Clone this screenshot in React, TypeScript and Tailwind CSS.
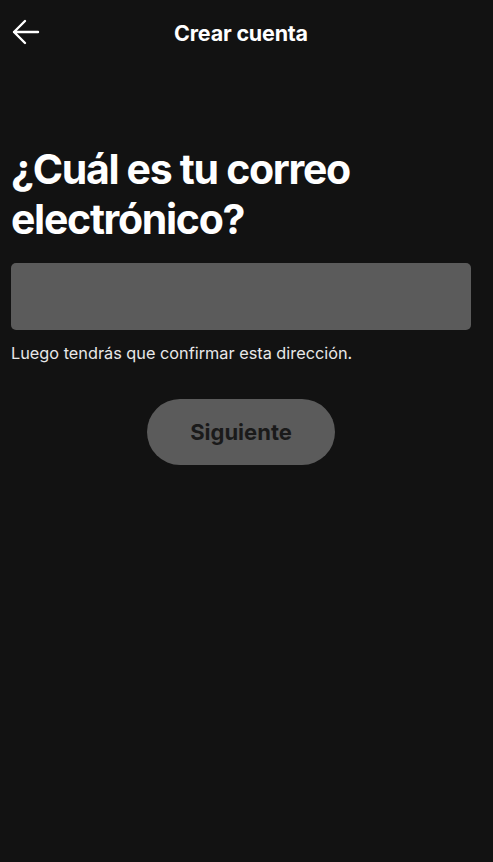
import React from "react";

const font = { fontFamily: "Inter, 'Noto Sans', sans-serif" };

export default function App() {
  return (
    <div className="min-h-[862px] w-full bg-[#121212] px-[11px] text-white" style={font}>
      <div className="flex w-[460px] flex-col">
        <header className="relative flex h-[66px] items-center justify-center">
          <button className="absolute left-0 top-[17px] text-white" title="Atrás">
            <svg width="30" height="30" viewBox="0 0 30 30" fill="none">
              <path
                d="M27 15H3M14 4L3 15l11 11"
                stroke="currentColor"
                strokeWidth="2.4"
                strokeLinecap="round"
                strokeLinejoin="round"
              />
            </svg>
          </button>
          <h1 className="text-[21.5px] font-bold tracking-[-0.2px]">Crear cuenta</h1>
        </header>

        <h2 className="mt-[78px] text-[41px] font-bold leading-[50px] tracking-[-1.3px]">
          ¿Cuál es tu correo electrónico?
        </h2>

        <input
          type="email"
          className="mt-[19px] h-[67px] w-full rounded-[5px] bg-[#5b5b5b] px-3 text-lg text-white outline-none"
        />
        <p className="mt-[12px] text-[16.3px] leading-[22px] text-[#e8e8e8]">
          Luego tendrás que confirmar esta dirección.
        </p>

        <div className="mt-[35px] flex justify-center">
          <button className="h-[66px] w-[188px] rounded-full bg-[#5b5b5b] text-[22px] font-bold text-[#1a1a1a]">
            Siguiente
          </button>
        </div>
      </div>
    </div>
  );
}
